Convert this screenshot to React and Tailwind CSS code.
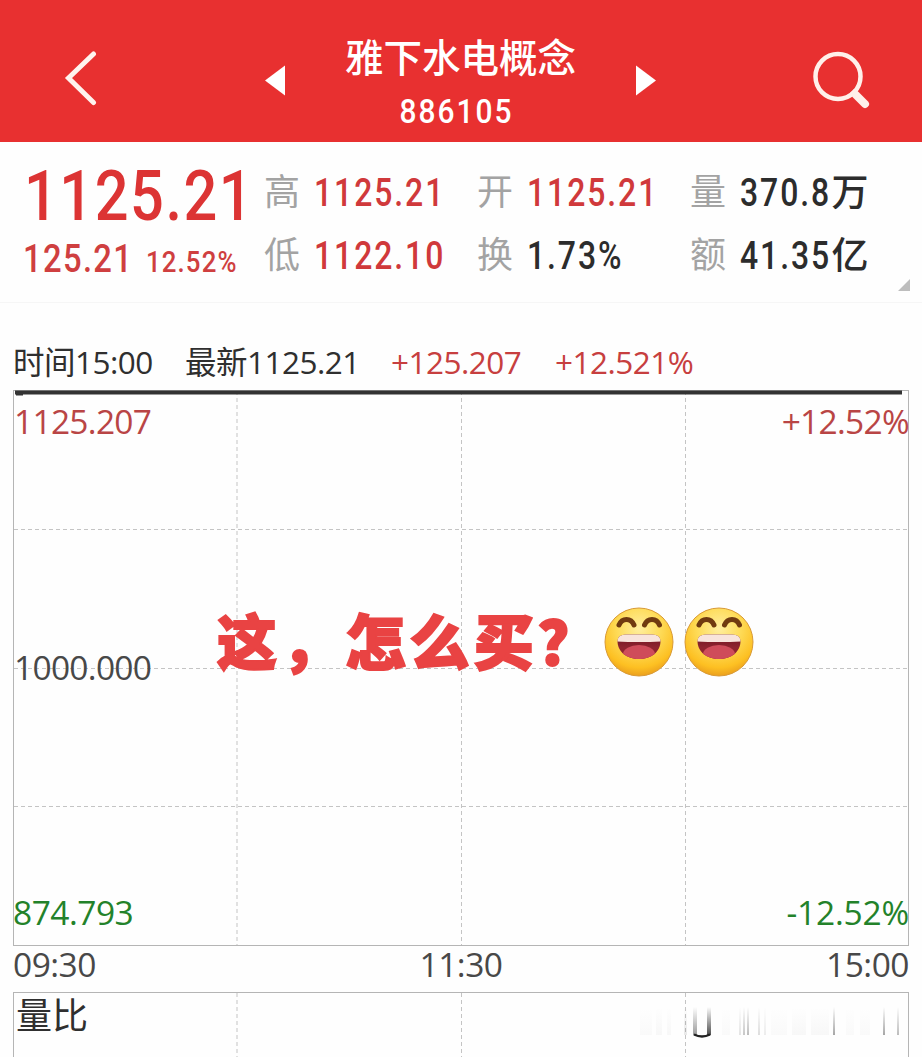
const stats = [
  { label: '高', value: '1125.21', color: 'text-[#d0393b]' },
  { label: '开', value: '1125.21', color: 'text-[#d0393b]' },
  { label: '量', value: '370.8', unit: '万', color: 'text-[#2c2c2c]' },
  { label: '低', value: '1122.10', color: 'text-[#d0393b]' },
  { label: '换', value: '1.73%', color: 'text-[#2c2c2c]' },
  { label: '额', value: '41.35', unit: '亿', color: 'text-[#2c2c2c]' },
];

// 底部残影: x, 宽度, 透明度
const streaks = [
  [640, 12, 0.02], [656, 6, 0.03], [667, 4, 0.03], [684, 3, 0.1], [693, 4, 0.45], [707, 4, 0.8],
  [722, 8, 0.02], [739, 2, 0.12], [743, 2, 0.25], [747, 2, 0.3], [758, 2, 0.15], [764, 2, 0.08],
  [771, 16, 0.02], [792, 14, 0.03], [811, 18, 0.03], [833, 2, 0.4], [846, 8, 0.02], [860, 10, 0.02],
  [883, 2, 0.4], [897, 2, 0.3],
];

function Smile({ id }) {
  return (
    <svg width="70" height="70" viewBox="0 0 70 70">
      <defs>
        <radialGradient id={`face-${id}`} cx="0.5" cy="0.3" r="0.72">
          <stop offset="0" stopColor="#ffeea0" />
          <stop offset="0.45" stopColor="#fedb57" />
          <stop offset="0.8" stopColor="#fdc022" />
          <stop offset="1" stopColor="#e89a1c" />
        </radialGradient>
        <linearGradient id={`mouth-${id}`} x1="0" y1="0" x2="0" y2="1">
          <stop offset="0" stopColor="#6e1620" />
          <stop offset="0.5" stopColor="#8f2430" />
        </linearGradient>
        <clipPath id={`clip-${id}`}>
          <path d="M13.500 34 Q13.500 27.500 22 27.500 H48 Q56.500 27.500 56.500 34 C56.500 45 47 52 35 52 C23 52 13.500 45 13.500 34Z" />
        </clipPath>
      </defs>
      <circle cx="35" cy="35" r="34" fill={`url(#face-${id})`} stroke="#d99a35" strokeWidth="1" />
      <path d="M15 18 C18 10.500 27 10.500 30 18" fill="none" stroke="#703a10" strokeWidth="5" strokeLinecap="round" />
      <path d="M40.500 18 C43.500 10.500 52.500 10.500 55.500 18" fill="none" stroke="#703a10" strokeWidth="5" strokeLinecap="round" />
      <g clipPath={`url(#clip-${id})`}>
        <rect x="13" y="27" width="44" height="27" fill={`url(#mouth-${id})`} />
        <ellipse cx="35" cy="47" rx="16" ry="9" fill="#cf4c5a" />
        <path d="M13 26 H57 V34.500 Q35 35.500 13 34.500Z" fill="#f8e4dc" />
      </g>
    </svg>
  );
}

export default function App() {
  return (
    <div className="w-[922px] h-[1057px] overflow-hidden bg-[#fefefe] font-['Roboto','Noto_Sans_CJK_SC',sans-serif]">
      {/* 顶部 */}
      <header className="h-[142px] grid grid-cols-[265px_20px_351px_20px_266px] items-start bg-[#e83030] text-white">
        <button className="pl-[64px] pt-[50px]">
          <svg width="36" height="56" viewBox="0 0 36 56" fill="none" stroke="#fff3ee" strokeWidth="5" strokeLinecap="round" strokeLinejoin="miter">
            <path d="M29.500 4 L4.500 28 L29.500 52.500" />
          </svg>
        </button>
        <svg className="mt-[65px]" width="20" height="31" viewBox="0 0 20 31" fill="white">
          <path d="M0 15.500 L20 0.500 V30.500Z" />
        </svg>
        <div className="text-center pt-[34px]">
          <h1 className="text-[38.500px] leading-[50px] font-medium">雅下水电概念</h1>
          <p className="text-[34px] leading-[40px] font-medium mt-[7px] pr-[9px] tracking-[2.300px] scale-x-[0.88]">886105</p>
        </div>
        <svg className="mt-[65px]" width="20" height="31" viewBox="0 0 20 31" fill="white">
          <path d="M20 15.500 L0 0.500 V30.500Z" />
        </svg>
        <button className="pl-[154px] pt-[48px]">
          <svg width="62" height="64" viewBox="0 0 62 64" fill="none" stroke="#fff0ea">
            <circle cx="28" cy="28.500" r="22.500" strokeWidth="4.500" />
            <path d="M46 47 L55 56" strokeWidth="8" strokeLinecap="round" />
            <path d="M42 43 L46 47" strokeWidth="5" />
          </svg>
        </button>
      </header>

      {/* 行情 */}
      <section className="relative h-[161px] flex border-b border-[#f6f6f6]">
        <div className="w-[264px] shrink-0 pl-[23px] pt-[14px] text-[#dc3434] whitespace-nowrap">
          <div className="ml-px text-[70px] leading-[80px] font-medium tracking-[1.800px] origin-left scale-x-[0.85]">1125.21</div>
          <div className="flex items-baseline leading-[40px] font-medium text-[#cf3f40] mt-[3px]">
            <span className="w-[123px] text-[39px] tracking-[1.600px] origin-left scale-x-[0.84]">125.21</span>
            <span className="text-[30px] tracking-[1.300px] origin-left scale-x-[0.86]">12.52%</span>
          </div>
        </div>
        <div className="grid grid-cols-[213px_213px_213px] auto-rows-[63px] pt-[20px]">
          {stats.map(s => (
            <div key={s.label} className="flex leading-[63px] whitespace-nowrap">
              <span className="w-[50px] text-[36px] text-[#a3a3a3]">{s.label}</span>
              <span className={`text-[38px] font-medium tracking-[2.300px] origin-left scale-x-[0.84] ${s.color}`}>{s.value}</span>
              {s.unit && <span className={`-ml-[17px] text-[37px] font-medium ${s.color}`}>{s.unit}</span>}
            </div>
          ))}
        </div>
        <svg className="absolute right-[12px] bottom-[11px]" width="12" height="12" viewBox="0 0 12 12" fill="#bdbdbd">
          <path d="M12 0 V12 H0Z" />
        </svg>
      </section>

      <div className="font-['Open_Sans','Noto_Sans_CJK_SC',sans-serif] text-[#2f2f2f]">
        <div className="h-[87px] flex pt-[39px] pl-[13px] text-[31.500px] leading-[40px] tracking-[-0.500px] whitespace-nowrap">
          <span className="w-[172px]">时间15:00</span>
          <span className="w-[206px]">最新1125.21</span>
          <span className="w-[164px] text-[#c73f3f]">+125.207</span>
          <span className="text-[#c73f3f]">+12.521%</span>
        </div>

        {/* 分时图 */}
        <div className="relative ml-[13px] w-[896px] h-[556px] border border-[#b5b5b5]">
          <svg className="absolute -left-px -top-px" width="896" height="556" viewBox="0 0 896 556" fill="none">
            <g stroke="#c4c4c4" strokeDasharray="4 3">
              <path d="M224 1 V555 M448.500 1 V555 M672.500 1 V555" />
              <path d="M1 139.500 H895 M1 278.500 H895 M1 416.500 H895" />
            </g>
            <path d="M2 2.500 H889" stroke="#333333" strokeWidth="4" />
            <path d="M3 4 H10" stroke="#333333" strokeWidth="3" />
          </svg>
          <div className="relative h-full flex flex-col justify-between pt-[10px] pb-[13px] text-[33.500px] leading-[40px] tracking-[-0.700px]">
            <div className="flex justify-between text-[#b94545]">
              <span>1125.207</span>
              <span className="-mr-px">+12.52%</span>
            </div>
            <div className="text-[#484848]">1000.000</div>
            <div className="flex justify-between text-[#23822a]">
              <span className="-ml-px tracking-[-0.500px]">874.793</span>
              <span className="-mr-px tracking-[-0.200px]">-12.52%</span>
            </div>
          </div>
          <div className="absolute left-[203px] top-[216px] flex items-center">
            <span className="w-[387px] -mt-[7px] text-[60px] leading-[76px] tracking-[4.200px] font-black text-[#e94343] whitespace-nowrap [-webkit-text-stroke:2px_#e94343] font-['Noto_Sans_CJK_SC',sans-serif]">这，怎么买？</span>
            <div className="flex gap-[10px]">
              <Smile id="a" />
              <Smile id="b" />
            </div>
          </div>
        </div>
        <div className="h-[46px] grid grid-cols-3 px-[13px] text-[33.500px] leading-[36px] tracking-[-0.500px] text-[#484848]">
          <span>09:30</span>
          <span className="text-center">11:30</span>
          <span className="text-right">15:00</span>
        </div>

        {/* 量比 */}
        <div className="relative ml-[13px] w-[896px] h-[66px] border border-b-0 border-[#b5b5b5]">
          <svg className="absolute -left-px -top-px" width="896" height="66" viewBox="13 991 896 66" fill="none">
            <defs>
              <linearGradient id="streak" x1="0" y1="0" x2="0" y2="1">
                <stop offset="0" stopColor="#222" stopOpacity="0" />
                <stop offset="1" stopColor="#222" />
              </linearGradient>
            </defs>
            <path d="M237 992 V1057 M461.500 992 V1057 M685.500 992 V1057" stroke="#c4c4c4" strokeDasharray="4 3" />
            {streaks.map(([x, w, o]) => (
              <rect key={x} x={x} y="1006" width={w} height="28" fill="url(#streak)" opacity={o} />
            ))}
            <path d="M694 1033.500 Q702 1037.500 710 1033.500" stroke="#222" strokeWidth="2.500" />
          </svg>
          <div className="relative pl-[2px] pt-[3px] text-[36px] leading-[40px]">量比</div>
        </div>
      </div>
    </div>
  );
}
